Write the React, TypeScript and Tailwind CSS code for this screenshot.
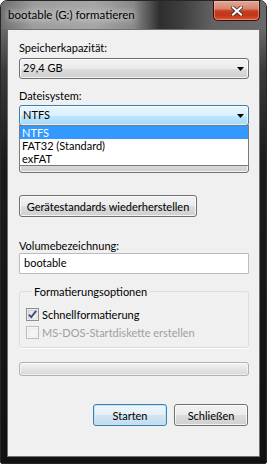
import React from 'react';

const btnFace =
  'bg-[linear-gradient(180deg,#f2f2f2_0%,#ebebeb_50%,#dddddd_50%,#cfcfcf_100%)] shadow-[inset_0_0_0_1px_rgba(255,255,255,0.75)]';

const Arrow = () => (
  <svg width="7" height="4" viewBox="0 0 7 4" className="block">
    <polygon points="0,0 7,0 3.5,4" fill="#000" />
  </svg>
);

const Combo = ({ value, hot = false }: { value?: string; hot?: boolean }) => (
  <div
    className={`h-[21px] rounded-[3px] border flex items-center justify-between pl-[3px] pr-[4px] ${
      hot
        ? 'border-[#3c7fb1] bg-[linear-gradient(180deg,#eaf6fd_0%,#d9f0fc_50%,#bee6fd_50%,#a7d9f5_100%)] shadow-[inset_0_0_0_1px_rgba(255,255,255,0.6)]'
        : `border-[#707070] ${btnFace}`
    }`}
  >
    <span>{value}</span>
    <Arrow />
  </div>
);

const Checkbox = ({ checked = false, disabled = false }: { checked?: boolean; disabled?: boolean }) => (
  <svg width="13" height="13" viewBox="0 0 13 13" className="block shrink-0">
    <defs>
      <linearGradient id={disabled ? 'cbd' : 'cbn'} x1="0" y1="0" x2="1" y2="1">
        <stop offset="0" stopColor={disabled ? '#f0f0f0' : '#dcdcdc'} />
        <stop offset="1" stopColor={disabled ? '#f8f8f8' : '#fbfbfb'} />
      </linearGradient>
    </defs>
    <rect x="0.5" y="0.5" width="12" height="12" fill="#fff" stroke={disabled ? '#bcbcbc' : '#8e8f8f'} />
    <rect x="2" y="2" width="9" height="9" fill={`url(#${disabled ? 'cbd' : 'cbn'})`} stroke={disabled ? '#e0e0e0' : '#b8b8b8'} strokeWidth="0.6" />
    {checked && (
      <path d="M2.8 6.6 L5.2 9.2 L10.2 2.8" fill="none" stroke="#3d4f82" strokeWidth="1.9" strokeLinejoin="round" />
    )}
  </svg>
);

export default function App() {
  return (
    <div className="w-[267px] h-[464px] bg-white font-['Lato','Noto_Sans',sans-serif] text-[11px] text-black">
      <div className="relative w-[267px] h-[464px] rounded-t-[7px] rounded-b-[2px] overflow-hidden border border-[#262626] bg-[linear-gradient(180deg,#7a7a7a_0px,#676767_30px,#3a3a3a_70px,#1b1b1b_160px,#111111_100%)] flex flex-col">
        {/* title bar */}
        <div className="h-[28px] shrink-0 flex items-center pl-[7px] bg-[linear-gradient(90deg,#6c6c6c_0%,#9c9c9c_12%,#a6a6a6_35%,#8a8a8a_50%,#2e2e2e_60%,#3e3e3e_68%,#626262_80%,#6a6a6a_100%)]">
          <span className="leading-[15px] text-[11.5px] -mt-[1px] [text-shadow:0_0_6px_#e8e8e8,0_0_10px_#d8d8d8]">
            bootable (G:) formatieren
          </span>
        </div>

        {/* close button */}
        <div className="absolute top-0 right-[6px] w-[47px] h-[20px] rounded-b-[5px] border border-t-0 border-[#3b0e08] bg-[linear-gradient(180deg,#e4a797_0%,#d88570_40%,#c4401f_52%,#c3351a_75%,#d9582f_100%)] shadow-[inset_0_0_0_1px_rgba(255,200,180,0.45)] flex items-center justify-center">
          <svg width="12" height="10" viewBox="0 0 12 10" className="block">
            <path d="M2 1.5 L10 8.5 M10 1.5 L2 8.5" stroke="#3a2320" strokeWidth="3.6" strokeLinecap="square" />
            <path d="M2 1.5 L10 8.5 M10 1.5 L2 8.5" stroke="#ffffff" strokeWidth="2.2" strokeLinecap="square" />
          </svg>
        </div>

        {/* client area */}
        <div className="relative mx-[6px] h-[428px] shrink-0 border border-[#6f6f6f] bg-[#f0f0f0] pl-[11px] pr-[10px] flex flex-col">
          <div className="mt-[10px] leading-[15px]">Speicherkapazität:</div>
          <div className="mt-[3px]">
            <Combo value="29,4 GB" />
          </div>

          <div className="mt-[9px] leading-[15px]">Dateisystem:</div>
          <div className="mt-[2px]">
            <Combo value="NTFS" hot />
          </div>

          {/* allocation size row, hidden under the open list */}
          <div className="mt-[9px] h-[15px]" />
          <div className="mt-[2px]">
            <Combo />
          </div>

          <div className="mt-[22px]">
            <button className={`h-[22px] w-[178px] rounded-[3px] border border-[#707070] ${btnFace} leading-[15px]`}>
              Gerätestandards wiederherstellen
            </button>
          </div>

          <div className="mt-[21px] leading-[15px]">Volumebezeichnung:</div>
          <div className="h-[21px] border border-[#b9bcc2] bg-white rounded-[1px] flex items-center pl-[4px]">
            bootable
          </div>

          <fieldset className="mt-[10px] border border-[#d5dfe5] rounded-[3px] pl-[6px] pb-[7px] shadow-[0_1px_0_#fff]">
            <legend className="ml-[6px] px-[2px] leading-[15px]">Formatierungsoptionen</legend>
            <div className="mt-[8px] h-[15px] flex items-center gap-[3px]">
              <Checkbox checked />
              <span className="leading-[15px]">Schnellformatierung</span>
            </div>
            <div className="mt-[3px] h-[15px] flex items-center gap-[3px] text-[#a0a0a0]">
              <Checkbox disabled />
              <span className="leading-[15px]">MS-DOS-Startdiskette erstellen</span>
            </div>
          </fieldset>

          <div className="mt-[14px] h-[14px] rounded-[3px] border border-[#b2b2b2] bg-[linear-gradient(180deg,#f4f4f4_0%,#e6e6e6_45%,#d6d6d6_100%)] shadow-[inset_0_0_0_1px_rgba(255,255,255,0.6)]" />

          <div className="mt-[28px] flex justify-end gap-[7px] pr-[1px]">
            <button className="h-[22px] w-[74px] rounded-[3px] border border-[#3c7fb1] bg-[linear-gradient(180deg,#eef6fb_0%,#e3eff7_50%,#d2e5f1_50%,#c4dced_100%)] shadow-[inset_0_0_0_1px_#bfe4f8] leading-[15px]">
              Starten
            </button>
            <button className={`h-[22px] w-[74px] rounded-[3px] border border-[#707070] ${btnFace} leading-[15px]`}>
              Schließen
            </button>
          </div>

          {/* open dropdown list of Dateisystem */}
          <div className="absolute left-[11px] top-[95px] w-[230px] h-[41px] border border-[#7a7a7a] bg-white flex flex-col">
            <div className="h-[13px] leading-[13px] bg-[#3399ff] text-white pl-[2px]">NTFS</div>
            <div className="h-[13px] leading-[13px] pl-[2px]">FAT32 (Standard)</div>
            <div className="h-[13px] leading-[13px] pl-[2px]">exFAT</div>
          </div>
        </div>
      </div>
    </div>
  );
}
